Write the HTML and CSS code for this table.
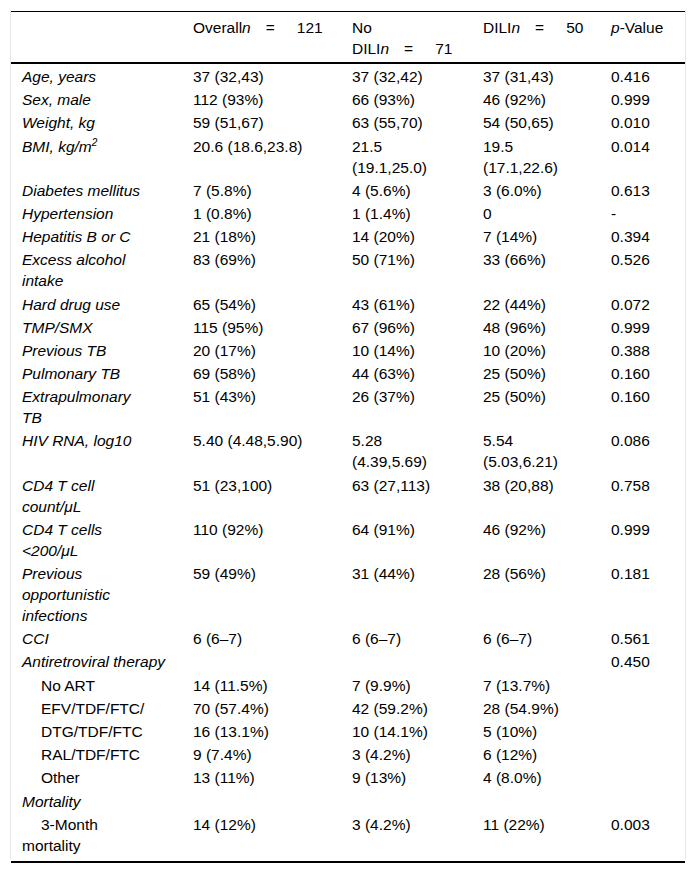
FILE: index.html
```html
<!DOCTYPE html>
<html lang="en">
  <head>
    <meta charset="UTF-8" />
    <meta name="viewport" content="width=device-width, initial-scale=1.0" />
    <title>Baseline characteristics</title>
    <link rel="stylesheet" href="styles.css">
  </head>

  <body>
    <div class="frame">
      <table class="data">
        <colgroup>
          <col class="c-label" />
          <col class="c-all" />
          <col class="c-no" />
          <col class="c-dili" />
          <col class="c-p" />
        </colgroup>
        <thead>
          <tr>
            <th></th>
            <th>Overall<span class="n"><i>n</i><span class="eq">=</span>121</span></th>
            <th class="no">No DILI<span class="n"><i>n</i><span class="eq">=</span>71</span></th>
            <th class="dili">DILI<span class="n"><i>n</i><span class="eq">=</span>50</span></th>
            <th><i>p</i>-Value</th>
          </tr>
        </thead>
        <tbody>
          <tr><td class="lbl">Age, years</td><td>37 (32,43)</td><td class="no">37 (32,42)</td><td class="dili">37 (31,43)</td><td>0.416</td></tr>
          <tr><td class="lbl">Sex, male</td><td>112 (93%)</td><td class="no">66 (93%)</td><td class="dili">46 (92%)</td><td>0.999</td></tr>
          <tr><td class="lbl">Weight, kg</td><td>59 (51,67)</td><td class="no">63 (55,70)</td><td class="dili">54 (50,65)</td><td>0.010</td></tr>
          <tr><td class="lbl">BMI, kg/m<sup>2</sup></td><td>20.6 (18.6,23.8)</td><td class="no">21.5 (19.1,25.0)</td><td class="dili">19.5 (17.1,22.6)</td><td>0.014</td></tr>
          <tr><td class="lbl">Diabetes mellitus</td><td>7 (5.8%)</td><td class="no">4 (5.6%)</td><td class="dili">3 (6.0%)</td><td>0.613</td></tr>
          <tr><td class="lbl">Hypertension</td><td>1 (0.8%)</td><td class="no">1 (1.4%)</td><td class="dili">0</td><td>-</td></tr>
          <tr><td class="lbl">Hepatitis B or C</td><td>21 (18%)</td><td class="no">14 (20%)</td><td class="dili">7 (14%)</td><td>0.394</td></tr>
          <tr><td class="lbl">Excess alcohol intake</td><td>83 (69%)</td><td class="no">50 (71%)</td><td class="dili">33 (66%)</td><td>0.526</td></tr>
          <tr><td class="lbl">Hard drug use</td><td>65 (54%)</td><td class="no">43 (61%)</td><td class="dili">22 (44%)</td><td>0.072</td></tr>
          <tr><td class="lbl">TMP/SMX</td><td>115 (95%)</td><td class="no">67 (96%)</td><td class="dili">48 (96%)</td><td>0.999</td></tr>
          <tr><td class="lbl">Previous TB</td><td>20 (17%)</td><td class="no">10 (14%)</td><td class="dili">10 (20%)</td><td>0.388</td></tr>
          <tr><td class="lbl">Pulmonary TB</td><td>69 (58%)</td><td class="no">44 (63%)</td><td class="dili">25 (50%)</td><td>0.160</td></tr>
          <tr><td class="lbl">Extrapulmonary TB</td><td>51 (43%)</td><td class="no">26 (37%)</td><td class="dili">25 (50%)</td><td>0.160</td></tr>
          <tr><td class="lbl">HIV RNA, log10</td><td>5.40 (4.48,5.90)</td><td class="no">5.28 (4.39,5.69)</td><td class="dili">5.54 (5.03,6.21)</td><td>0.086</td></tr>
          <tr><td class="lbl">CD4 T cell <span class="unit">count/&mu;L</span></td><td>51 (23,100)</td><td class="no">63 (27,113)</td><td class="dili">38 (20,88)</td><td>0.758</td></tr>
          <tr><td class="lbl">CD4 T cells <span class="unit">&lt;200/&mu;L</span></td><td>110 (92%)</td><td class="no">64 (91%)</td><td class="dili">46 (92%)</td><td>0.999</td></tr>
          <tr><td class="lbl">Previous opportunistic infections</td><td>59 (49%)</td><td class="no">31 (44%)</td><td class="dili">28 (56%)</td><td>0.181</td></tr>
          <tr><td class="lbl">CCI</td><td>6 (6&ndash;7)</td><td class="no">6 (6&ndash;7)</td><td class="dili">6 (6&ndash;7)</td><td>0.561</td></tr>
          <tr><td class="lbl wide" colspan="4">Antiretroviral therapy</td><td>0.450</td></tr>
          <tr><td class="sub">No ART</td><td>14 (11.5%)</td><td class="no">7 (9.9%)</td><td class="dili">7 (13.7%)</td><td></td></tr>
          <tr><td class="sub">EFV/TDF/FTC/</td><td>70 (57.4%)</td><td class="no">42 (59.2%)</td><td class="dili">28 (54.9%)</td><td></td></tr>
          <tr><td class="sub">DTG/TDF/FTC</td><td>16 (13.1%)</td><td class="no">10 (14.1%)</td><td class="dili">5 (10%)</td><td></td></tr>
          <tr><td class="sub">RAL/TDF/FTC</td><td>9 (7.4%)</td><td class="no">3 (4.2%)</td><td class="dili">6 (12%)</td><td></td></tr>
          <tr><td class="sub">Other</td><td>13 (11%)</td><td class="no">9 (13%)</td><td class="dili">4 (8.0%)</td><td></td></tr>
          <tr><td class="lbl wide" colspan="5">Mortality</td></tr>
          <tr class="last"><td class="sub">3-Month mortality</td><td>14 (12%)</td><td class="no">3 (4.2%)</td><td class="dili">11 (22%)</td><td>0.003</td></tr>
        </tbody>
      </table>
    </div>
    <div class="rule"></div>
  </body>
</html>
```

FILE: styles.css
```css
* {
  box-sizing: border-box;
}

body {
  margin: 0;
  font-family: "Liberation Sans", Arial, sans-serif;
  font-size: 15.5px;
  color: #000000;
  background-color: #ffffff;
}

.frame {
  margin: 10px 10px 0;
  padding-top: 1px;
  border-left: 1px solid #e6e6e6;
  border-right: 1px solid #e6e6e6;
}

.data {
  width: 100%;
  table-layout: fixed;
  border-collapse: collapse;
  border-top: 1px solid #000000;
}

.c-label {
  width: 171px;
}

.c-all {
  width: 159px;
}

.c-no {
  width: 131px;
}

.c-dili {
  width: 128px;
}

.c-p {
  width: 85px;
}

.data th,
.data td {
  padding: 1px 8px 1.2px 11px;
  line-height: 21px;
  text-align: left;
  vertical-align: top;
  font-weight: normal;
}

.data th {
  padding-top: 5px;
  padding-bottom: 3px;
  border-bottom: 2px solid #000000;
}

.data td.lbl {
  font-style: italic;
  padding-right: 32px;
}

.data td.wide {
  padding-right: 8px;
}

.data td.sub {
  text-indent: 19px;
  padding-right: 32px;
}

.data .no {
  padding-right: 15px;
}

.data .dili {
  padding-right: 11px;
}

.data tbody tr:first-child td {
  padding-top: 2px;
}

.data tr.last td {
  padding-bottom: 3px;
}

.n,
.unit {
  white-space: nowrap;
}

.eq {
  margin: 0 22px 0 15px;
}

sup {
  font-size: 10px;
  line-height: 0;
}

.rule {
  margin: 2px 11px 0;
  border-top: 2px solid #000000;
}
```
